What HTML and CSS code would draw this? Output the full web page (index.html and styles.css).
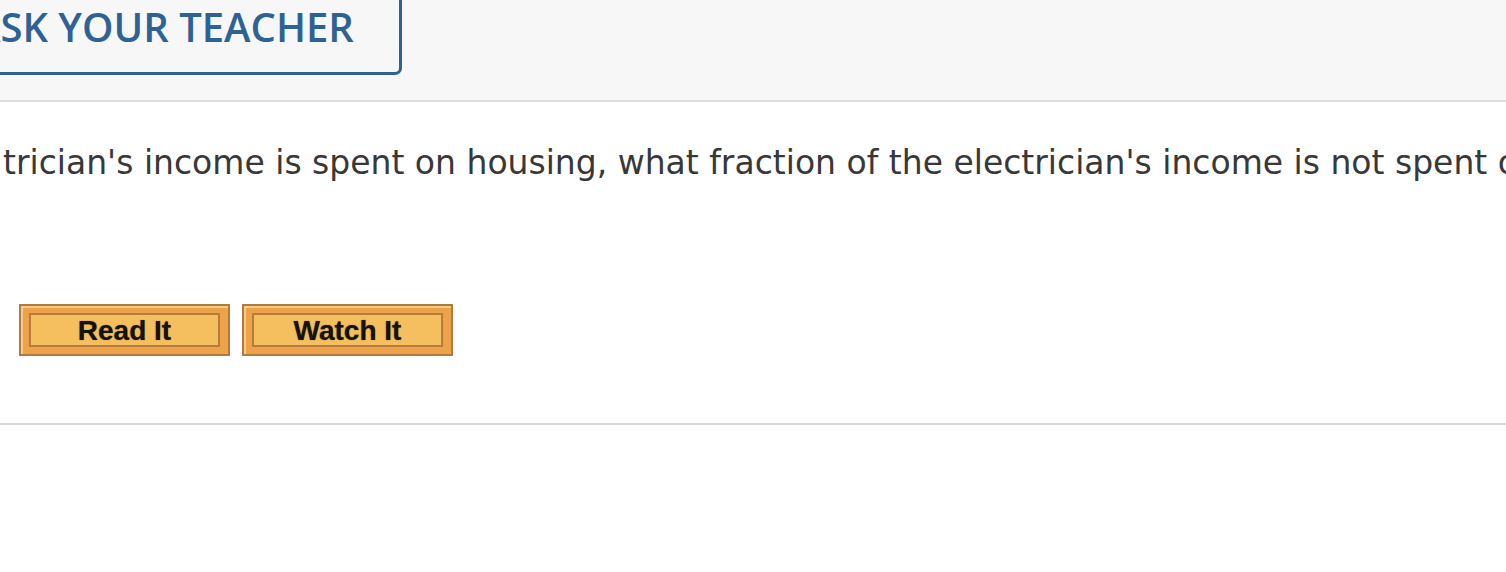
FILE: index.html
```html
<!DOCTYPE html>
<html>
<head>
<meta charset="utf-8">
<link rel="stylesheet" href="styles.css">
</head>
<body>
<div class="page">
  <div class="header">
    <div class="ask-btn">ASK YOUR TEACHER</div>
  </div>
  <div class="question">
    <p class="question-text">trician's income is spent on housing, what fraction of the electrician's income is not spent on housing?</p>
    <div class="help-row">
      <div class="help-btn"><span class="help-inner">Read It</span></div>
      <div class="help-btn"><span class="help-inner">Watch It</span></div>
    </div>
  </div>
  <div class="rule"></div>
</div>
</body>
</html>
```

FILE: styles.css
```css
html, body {
  margin: 0;
  padding: 0;
  background: #ffffff;
  overflow: hidden;
}
.page {
  width: 1506px;
  height: 572px;
  overflow: hidden;
}
.header {
  height: 100px;
  background: #f7f7f7;
  border-bottom: 2px solid #dddddd;
  overflow: hidden;
}
.ask-btn {
  box-sizing: border-box;
  width: 432px;
  height: 86px;
  margin-left: -30px;
  margin-top: -11px;
  border: 3px solid #2e6295;
  border-radius: 7px;
  font-family: "Open Sans", sans-serif;
  font-weight: 600;
  font-size: 40px;
  color: #2e6295;
  padding: 7px 0 0 1px;
  line-height: 56px;
  white-space: nowrap;
}
.question {
  padding: 0 0 0 3px;
}
.question-text {
  margin: 0;
  padding-top: 39px;
  font-family: "DejaVu Sans", Verdana, sans-serif;
  font-size: 33px;
  line-height: 44px;
  color: #383838;
  white-space: nowrap;
}
.help-row {
  display: flex;
  gap: 12px;
  margin-top: 119px;
  margin-left: 16px;
}
.help-btn {
  box-sizing: border-box;
  width: 211px;
  height: 52px;
  border: 2px solid #b07a40;
  background: #eea24a;
  box-shadow: inset 2px 2px 0 #f8cc88;
  padding: 7px 8px 7px 8px;
  display: flex;
}
.help-inner {
  flex: 1;
  display: flex;
  align-items: center;
  justify-content: center;
  border: 2px solid #b67d3e;
  background: #f5bf5f;
  font-family: "Liberation Sans", Arial, sans-serif;
  font-weight: bold;
  font-size: 28px;
  color: #151208;
  text-shadow: 0 0 1px rgba(20, 15, 5, 0.6);
  padding-top: 1px;
}
.rule {
  margin-top: 67px;
  height: 2px;
  background: #d6d6d6;
}
```
